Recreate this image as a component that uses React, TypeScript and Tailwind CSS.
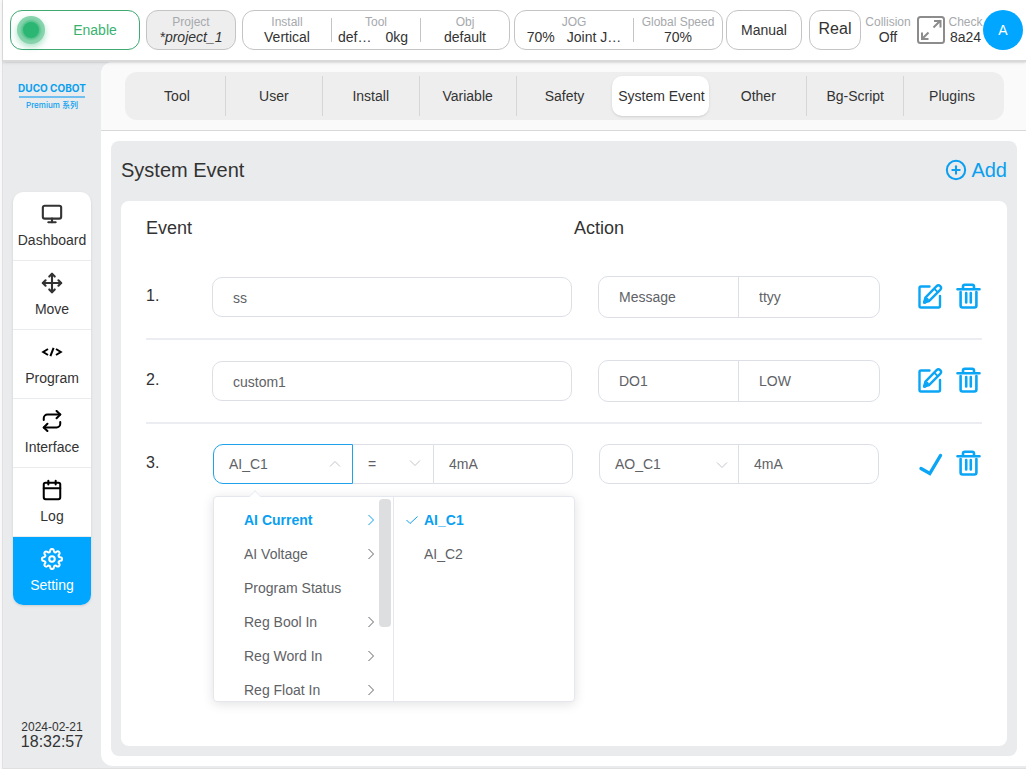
import { useState } from 'react';
import type { ReactNode } from 'react';
import { FiCalendar, FiMonitor, FiMove, FiPlusCircle, FiRepeat, FiSettings } from 'react-icons/fi';

const TABS = ['Tool', 'User', 'Install', 'Variable', 'Safety', 'System Event', 'Other', 'Bg-Script', 'Plugins'];

const CONDITIONS = [
  { label: 'AI Current', nested: true },
  { label: 'AI Voltage', nested: true },
  { label: 'Program Status', nested: false },
  { label: 'Reg Bool In', nested: true },
  { label: 'Reg Word In', nested: true },
  { label: 'Reg Float In', nested: true },
];

const CHANNELS = ['AI_C1', 'AI_C2'];

function CodeIcon() {
  return (
    <svg className="w-[22px] h-[22px]" viewBox="0 0 22 22" fill="none" stroke="currentColor" strokeWidth="2">
      <path d="M7 8 2.200 11 7 14M15 8l4.800 3L15 14M12.600 6.800 9.400 15.200" />
    </svg>
  );
}

const NAV: { label: string; icon: ReactNode; tone: string }[] = [
  { label: 'Dashboard', icon: <FiMonitor size={22} strokeWidth={2.3} />, tone: 'text-[#333]' },
  { label: 'Move', icon: <FiMove size={22} strokeWidth={2.3} />, tone: 'text-[#333]' },
  { label: 'Program', icon: <CodeIcon />, tone: 'text-black' },
  { label: 'Interface', icon: <FiRepeat size={22} strokeWidth={2.2} />, tone: 'text-black' },
  { label: 'Log', icon: <FiCalendar size={22} strokeWidth={2.2} />, tone: 'text-black' },
  { label: 'Setting', icon: <FiSettings size={22} strokeWidth={2.2} />, tone: 'text-white' },
];

function EditIcon() {
  return (
    <svg className="w-[25px] h-[26px]" viewBox="0 0 25 26" fill="none" stroke="currentColor" strokeWidth="2.4" strokeLinecap="round" strokeLinejoin="round">
      <path d="M11.500 3.500H3A1.500 1.500 0 0 0 1.500 5v18A1.500 1.500 0 0 0 3 24.500h17.500A1.500 1.500 0 0 0 22 23V13" />
      <path d="M6.200 19.600l1.200-5L18.600 3.200a2.500 2.500 0 0 1 3.600 3.600L11 18.200z" />
      <path d="M16.200 5.600l3.400 3.400" strokeWidth="1.800" />
      <path d="M6.800 19l2.400-2.400" strokeWidth="3.400" />
    </svg>
  );
}

function TrashIcon() {
  return (
    <svg className="w-[25px] h-[26px]" viewBox="0 0 25 26" fill="none" stroke="currentColor" strokeWidth="2.600" strokeLinecap="round" strokeLinejoin="round">
      <path d="M1.500 6.200h22M7 6V3.500A1.800 1.800 0 0 1 8.800 1.700h7.400A1.800 1.800 0 0 1 18 3.500V6" />
      <path d="M4.600 9v13.500a2 2 0 0 0 2 2h11.800a2 2 0 0 0 2-2V9" />
      <path d="M10.200 10v9.500M14.800 10v9.500" />
    </svg>
  );
}

function CheckIcon() {
  return (
    <svg className="w-[25px] h-[26px]" viewBox="0 0 25 26" fill="none" stroke="currentColor" strokeWidth="3.400" strokeLinecap="round">
      <path d="M3 18.500 11.800 23.500 22.500 5.500" />
    </svg>
  );
}

function ExpandIcon() {
  return (
    <svg className="w-7 h-7" viewBox="0 0 28 28" fill="none" stroke="currentColor" strokeWidth="2">
      <rect x="1" y="1" width="26" height="26" rx="2.500" />
      <path d="M16.500 11.500 23.500 4.500M17 5H23.500V11.500M11.500 16.500 4.500 23.500M5 16.500V23H11.500" />
    </svg>
  );
}

function Chevron({ className }: { className: string }) {
  return (
    <svg className={`w-3 h-3 ${className}`} viewBox="0 0 12 12" fill="none" stroke="currentColor">
      <path d="M1 3.500 6 8.500 11 3.500" />
    </svg>
  );
}

function Stat({ label, className = '', children }: { label: string; className?: string; children: ReactNode }) {
  return (
    <div className={`flex flex-col items-center text-center ${className}`}>
      <span className="text-xs leading-[15px] text-[#a6a9ad]">{label}</span>
      <span className="text-sm leading-[15px] whitespace-nowrap">{children}</span>
    </div>
  );
}

function Divider() {
  return <div className="w-px h-6 bg-[#c4c4c4]" />;
}

function TopBar() {
  return (
    <header className="flex items-center justify-between h-[62px] pl-[7px] pr-[3px] bg-white border-b-2 border-[#d9d9d9] shadow-sm relative">
      <div className="flex items-center gap-1.5">
        <button className="flex items-center w-[130px] h-10 pl-1.5 rounded-xl border border-[#3fa873] text-sm text-[#3ab26f]">
          <span className="flex items-center justify-center size-7 mr-1.5 rounded-full bg-[#86d3ac] shadow-[0_3px_6px_#2bb67366]">
            <span className="size-4 rounded-full bg-[#2bb673] shadow-[0_0_2px_2px_#2bb67388]" />
          </span>
          <span className="flex-1 text-center">Enable</span>
        </button>
        <button className="flex items-center justify-center w-[90px] h-10 rounded-xl border border-[#c4c4c4] bg-[#eee]">
          <Stat label="Project"><i>*project_1</i></Stat>
        </button>
        <div className="flex items-center gap-1">
          <div className="flex items-center w-[268px] h-10 rounded-xl border border-[#c4c4c4]">
            <Stat label="Install" className="flex-1">Vertical</Stat>
            <Divider />
            <Stat label="Tool" className="flex-1">
              <span className="mr-3.5">def…</span>
              <span className="pr-1.5">0kg</span>
            </Stat>
            <Divider />
            <Stat label="Obj" className="flex-1">default</Stat>
          </div>
          <div className="flex items-center w-[209px] h-10 rounded-xl border border-[#c4c4c4]">
            <Stat label="JOG" className="flex-1">
              <span className="mr-3">70%</span>
              <span>Joint J…</span>
            </Stat>
            <Divider />
            <Stat label="Global Speed" className="w-[88px]">70%</Stat>
          </div>
          <button className="w-[76px] h-10 -ml-px mr-px rounded-xl border border-[#c4c4c4] text-sm">Manual</button>
        </div>
        <button className="w-[52px] h-10 pb-0.5 rounded-xl border border-[#c4c4c4] text-base">Real</button>
      </div>

      <div className="flex items-center gap-[3px]">
        <Stat label="Collision" className="w-[52px]">Off</Stat>
        <button aria-label="Full screen" className="text-[#8c8c8c]"><ExpandIcon /></button>
        <div className="flex items-center">
          <Stat label="Check" className="w-[35px]">8a24</Stat>
          <button className="size-10 rounded-full bg-[#00a6ff] text-sm text-white">A</button>
        </div>
      </div>
    </header>
  );
}

function SideBar() {
  return (
    <aside className="flex flex-col items-center w-[98px] shrink-0">
      <div className="flex flex-col items-center w-[66px] mt-5 text-[#0a9ff0]">
        <span className="font-['Inter',sans-serif] text-[10px] leading-[13px] font-bold whitespace-nowrap">DUCO COBOT</span>
        <div className="w-full h-0.5 mt-px bg-[#6fc0f0]" />
        <span className="mt-px font-['Inter','Noto_Sans_CJK_SC',sans-serif] text-[8px] leading-3 font-medium whitespace-nowrap">Premium 系列</span>
      </div>

      <nav className="flex flex-col w-[78px] mt-[81px] rounded-[10px] overflow-hidden bg-white shadow">
        {NAV.map((item) => (
          <a
            key={item.label}
            href="#"
            className={`flex flex-col items-center gap-1.5 h-[69px] pt-[11px] text-sm border-b last:h-[68px] last:border-b-0 ${
              item.label === 'Setting' ? 'bg-[#00a6ff] border-[#00a6ff] text-white' : 'border-[#e9ebec]'
            }`}
          >
            <span className={item.tone}>{item.icon}</span>
            <span className="leading-[18px]">{item.label}</span>
          </a>
        ))}
      </nav>

      <div className="flex flex-col items-center mt-auto mb-[18px]">
        <span className="text-xs leading-[14px]">2024-02-21</span>
        <span className="text-base leading-4">18:32:57</span>
      </div>
    </aside>
  );
}

function SavedRow({ index, name, action, value }: { index: number; name: string; action: string; value: string }) {
  return (
    <li className="grid grid-cols-[40px_minmax(0,360fr)_minmax(0,282fr)_76px] gap-x-[26px] items-center border-b-2 border-[#ebedf2] h-[84px] text-sm text-[#606266]">
      <span className="pb-0.5 text-base text-[#303133]">{index}.</span>
      <input
        aria-label={`Event ${index}`}
        readOnly
        defaultValue={name}
        className="w-full min-w-0 h-10 px-5 rounded-[10px] border border-[#dcdfe6] pt-0.5"
      />
      <div className="flex h-[42px] rounded-[10px] border border-[#dcdfe6]">
        <input aria-label={`Action ${index}`} readOnly defaultValue={action} className="w-1/2 px-5 border-r border-[#dcdfe6]" />
        <input aria-label={`Action value ${index}`} readOnly defaultValue={value} className="w-1/2 px-5" />
      </div>
      <div className="flex justify-end gap-[13px] pr-px pb-0.5 text-[#0ba5f5]">
        <button aria-label="Edit"><EditIcon /></button>
        <button aria-label="Delete"><TrashIcon /></button>
      </div>
    </li>
  );
}

function Cascader() {
  const [group, setGroup] = useState('AI Current');
  const [channel, setChannel] = useState('AI_C1');

  return (
    <div className="absolute top-full left-0 z-10 mt-3 flex w-[362px] h-[206px] rounded border border-[#e4e7ed] bg-white shadow-[0_2px_12px_rgba(0,0,0,0.12)]">
      <div className="absolute -top-[5px] left-[37px] size-2 rotate-45 border-t border-l border-[#ebeef5] bg-white" />
      <ul className="relative w-[180px] py-1.5 overflow-hidden border-r border-[#e4e7ed]">
        {CONDITIONS.map((c) => (
          <li key={c.label}>
            <button
              onClick={() => setGroup(c.label)}
              className={`flex items-center justify-between w-full h-[34px] pl-[30px] pr-4 ${
                c.label === group ? 'font-bold text-[#0a9ff0]' : ''
              }`}
            >
              {c.label}
              {c.nested && <Chevron className="-rotate-90" />}
            </button>
          </li>
        ))}
        <li aria-hidden="true" className="absolute top-0.5 right-0.5 w-3 h-32 rounded bg-[#dddee0]" />
      </ul>
      <ul className="flex-1 py-1.5">
        {CHANNELS.map((c) => (
          <li key={c}>
            <button
              onClick={() => setChannel(c)}
              className={`flex items-center w-full h-[34px] pl-3 ${c === channel ? 'font-bold text-[#0a9ff0]' : ''}`}
            >
              <span className="w-[18px]">
                {c === channel && (
                  <svg className="w-3 h-3" viewBox="0 0 12 12" fill="none" stroke="currentColor">
                    <path d="M.5 6 4 9.500 11.500 2.500" />
                  </svg>
                )}
              </span>
              {c}
            </button>
          </li>
        ))}
      </ul>
    </div>
  );
}

function EditingRow() {
  const [open, setOpen] = useState(true);

  return (
    <li className="grid grid-cols-[40px_minmax(0,360fr)_minmax(0,282fr)_76px] gap-x-[26px] items-center h-[80px] text-sm text-[#606266]">
      <span className="pb-0.5 text-base text-[#303133]">3.</span>
      <div className="relative flex h-10 ml-px -mr-px">
        <button
          aria-expanded={open}
          onClick={() => setOpen(!open)}
          className="flex items-center justify-between w-[140px] pl-[15px] pr-[11px] rounded-l-[10px] border border-[#1fa3e8]"
        >
          AI_C1
          <Chevron className="rotate-180 text-[#c0c4cc]" />
        </button>
        <div className="relative w-20 border-y border-[#dcdfe6]">
          <select aria-label="Operator" className="w-full h-full pl-[15px] appearance-none">
            <option>=</option>
          </select>
          <Chevron className="absolute right-3 top-3 text-[#c0c4cc] pointer-events-none" />
        </div>
        <input
          aria-label="Threshold"
          defaultValue="4mA"
          className="flex-1 min-w-0 px-[15px] rounded-r-[10px] border border-[#dcdfe6]"
        />
        {open && <Cascader />}
      </div>
      <div className="flex h-10 mx-px rounded-[10px] border border-[#dcdfe6]">
        <div className="relative w-1/2 border-r border-[#dcdfe6]">
          <select aria-label="Output" className="w-full h-full pl-[15px] appearance-none">
            <option>AO_C1</option>
          </select>
          <Chevron className="absolute right-[10px] top-3.5 text-[#c0c4cc] pointer-events-none" />
        </div>
        <input aria-label="Output value" defaultValue="4mA" className="w-1/2 px-[15px]" />
      </div>
      <div className="flex justify-end gap-[13px] pr-px pb-0.5 text-[#0ba5f5]">
        <button aria-label="Confirm"><CheckIcon /></button>
        <button aria-label="Delete"><TrashIcon /></button>
      </div>
    </li>
  );
}

export default function App() {
  const [tab, setTab] = useState('System Event');

  return (
    <div className="min-h-screen pl-[2px] bg-[#f8f8f8] font-['Liberation_Sans',Arial,sans-serif] text-[#333]">
      <div className="flex flex-col min-h-screen border-l border-b border-[#e0e0e0] bg-[#e9ebec]">
        <TopBar />
        <div className="flex flex-1">
          <SideBar />

          <main className="flex flex-col flex-1 min-w-0 mb-0.5 rounded-l-xl overflow-hidden bg-white">
            {/* Setting tabs */}
            <div className="pl-6 pr-[22px] py-2.5 border-b border-[#d9d9d9] bg-[#fafafa]">
              <div className="flex h-12 pl-[3px] pr-1 py-1 rounded-xl bg-[#eee]">
                {TABS.map((t, i) => {
                  const active = t === tab;
                  const ruled = !active && i > 0 && TABS[i - 1] !== tab;
                  return (
                    <button
                      key={t}
                      onClick={() => setTab(t)}
                      className={`flex-1 basis-0 text-sm whitespace-nowrap border-l ${
                        active ? 'rounded-[10px] bg-white border-transparent shadow-sm' : ruled ? 'border-[#d6d6d6]' : 'border-transparent'
                      }`}
                    >
                      {t}
                    </button>
                  );
                })}
              </div>
            </div>

            {/* Event list */}
            <section className="flex flex-col flex-1 mt-2.5 ml-2.5 mr-[9px] mb-2.5 px-2.5 pb-2.5 rounded-lg bg-[#e9ebec]">
              <div className="flex items-center justify-between h-[60px] pb-0.5 text-xl">
                <h1>System Event</h1>
                <button className="flex items-center gap-1 text-[#0a9ff0]">
                  <FiPlusCircle size={22} strokeWidth={2.2} />
                  Add
                </button>
              </div>
              <div className="flex-1 px-[25px] rounded-lg bg-white">
                <div className="grid grid-cols-[428fr_408fr] items-center h-[55px] pb-0.5 text-lg">
                  <h2>Event</h2>
                  <h2>Action</h2>
                </div>
                <ul>
                  <SavedRow index={1} name="ss" action="Message" value="ttyy" />
                  <SavedRow index={2} name="custom1" action="DO1" value="LOW" />
                  <EditingRow />
                </ul>
              </div>
            </section>
          </main>
        </div>
      </div>
    </div>
  );
}
